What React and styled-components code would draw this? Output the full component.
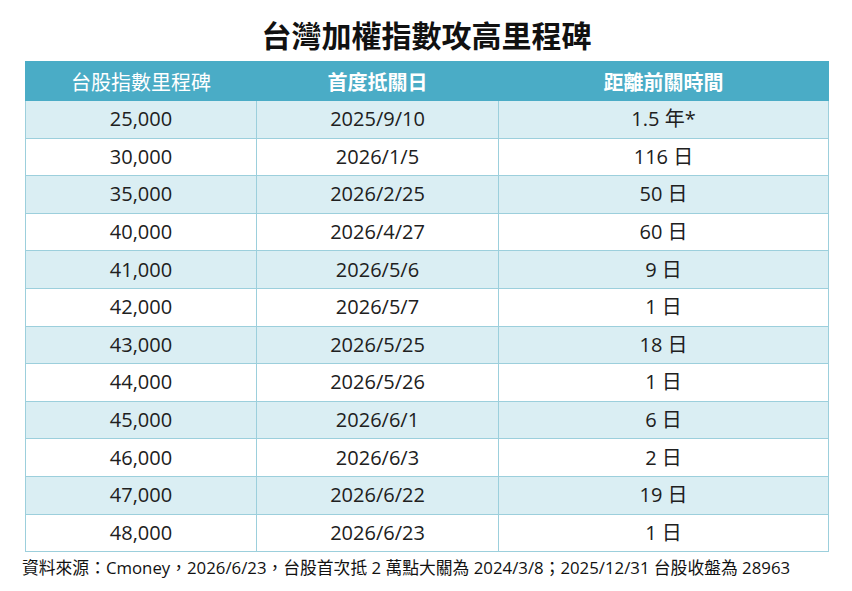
import React from 'react'
import styled, { createGlobalStyle } from 'styled-components'

const GlobalStyle = createGlobalStyle`
  html, body {
    margin: 0;
    padding: 0;
    background: #ffffff;
  }
  body {
    font-family: "Open Sans", "Noto Sans CJK TC", sans-serif;
    color: #1a1a1a;
  }
`

const Page = styled.div`
  width: 852px;
  height: 591px;
  box-sizing: border-box;
  padding: 16px 24px 0 25px;
  display: flex;
  flex-direction: column;
  align-items: stretch;
`

const Title = styled.h1`
  margin: 0 0 8px;
  height: 37px;
  line-height: 37px;
  text-align: center;
  font-family: "Noto Sans CJK TC", sans-serif;
  font-size: 30px;
  font-weight: 700;
  color: #111111;
`

const Table = styled.table`
  width: 803px;
  border-collapse: collapse;
  table-layout: fixed;
  font-size: 20px;
`

const HeadCell = styled.th`
  height: 38px;
  padding: 0;
  background: #4aacc6;
  color: #ffffff;
  font-family: "Noto Sans CJK TC", sans-serif;
  font-size: 20px;
  font-weight: ${p => (p.$bold ? 700 : 400)};
  text-align: center;
  vertical-align: middle;
  border: 1px solid #4aacc6;
`

const Row = styled.tr`
  height: 37.6px;
  background: ${p => (p.$shaded ? '#daeef3' : '#ffffff')};
`

const Cell = styled.td`
  padding: 0;
  text-align: center;
  vertical-align: middle;
  border: 1px solid #9ccfdc;
  color: #202020;
  line-height: 1;
`

const Note = styled.p`
  margin: 4px 0 0 -3px;
  font-size: 16.8px;
  line-height: 24px;
  color: #111111;
  white-space: nowrap;
`

const rows = [
  ['25,000', '2025/9/10', '1.5 年*'],
  ['30,000', '2026/1/5', '116 日'],
  ['35,000', '2026/2/25', '50 日'],
  ['40,000', '2026/4/27', '60 日'],
  ['41,000', '2026/5/6', '9 日'],
  ['42,000', '2026/5/7', '1 日'],
  ['43,000', '2026/5/25', '18 日'],
  ['44,000', '2026/5/26', '1 日'],
  ['45,000', '2026/6/1', '6 日'],
  ['46,000', '2026/6/3', '2 日'],
  ['47,000', '2026/6/22', '19 日'],
  ['48,000', '2026/6/23', '1 日'],
]

export default function App() {
  return (
    <Page>
      <GlobalStyle />
      <Title>台灣加權指數攻高里程碑</Title>
      <Table>
        <colgroup>
          <col style={{ width: 231 }} />
          <col style={{ width: 242 }} />
          <col style={{ width: 330 }} />
        </colgroup>
        <thead>
          <tr>
            <HeadCell>台股指數里程碑</HeadCell>
            <HeadCell $bold>首度抵關日</HeadCell>
            <HeadCell $bold>距離前關時間</HeadCell>
          </tr>
        </thead>
        <tbody>
          {rows.map((r, i) => (
            <Row key={r[0]} $shaded={i % 2 === 0}>
              <Cell>{r[0]}</Cell>
              <Cell>{r[1]}</Cell>
              <Cell>{r[2]}</Cell>
            </Row>
          ))}
        </tbody>
      </Table>
      <Note>資料來源：Cmoney，2026/6/23，台股首次抵 2 萬點大關為 2024/3/8；2025/12/31 台股收盤為 28963</Note>
    </Page>
  )
}
